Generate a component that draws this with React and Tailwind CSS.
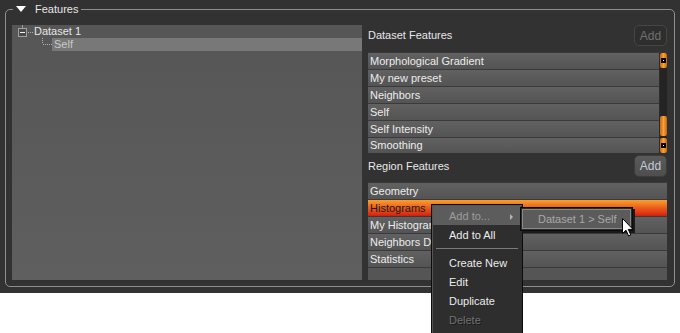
import React from 'react';

const datasetFeatures = [
  'Morphological Gradient',
  'My new preset',
  'Neighbors',
  'Self',
  'Self Intensity',
  'Smoothing',
];

const regionFeatures = [
  { name: 'Geometry' },
  { name: 'Histograms', selected: true },
  { name: 'My Histograms' },
  { name: 'Neighbors Distribution' },
  { name: 'Statistics' },
];

const menuItems = ['Create New', 'Edit', 'Duplicate'];

function ScrollArrow() {
  return (
    <div className="h-[15px] rounded-[2px] bg-gradient-to-r from-[#c4660e] via-[#fba232] to-[#c4660e] flex items-center justify-center">
      <div className="w-[5px] h-[5px] bg-black flex items-center justify-center">
        <div className="w-[1px] h-[1px] bg-white" />
      </div>
    </div>
  );
}

function Cursor() {
  return (
    <svg width="13" height="20" viewBox="0 0 13 20">
      <path
        d="M0.5 0.5 L0.5 15.5 L4 12.2 L6.6 18 L8.8 17 L6.3 11.4 L11 11.4 Z"
        fill="#fff"
        stroke="#000"
        strokeWidth="1"
        strokeLinejoin="miter"
      />
    </svg>
  );
}

export default function App() {
  return (
    <div className="relative w-[680px] h-[333px] overflow-hidden bg-white font-['Liberation_Sans',Arial,sans-serif] text-[11px] leading-none">
      <div className="h-[293px] bg-[#323232] pt-[9px] px-[5px]">
        {/* Features group */}
        <div className="relative h-[278px] border border-[#8e8e8e] rounded-[5px] pt-[15px] pl-[6px] pr-[7px] pb-[6px] flex gap-[6px]">
          <div className="absolute left-[7px] -top-[10px] h-[18px] pl-[3px] pr-[3px] bg-[#323232] flex items-center gap-[9px]">
            <div className="w-0 h-0 border-l-[5px] border-r-[5px] border-t-[6px] border-l-transparent border-r-transparent border-t-white" />
            <span className="text-[#e6e6e6]">Features</span>
          </div>

          {/* Tree */}
          <div className="w-[350px] h-full bg-gradient-to-b from-[#565656] to-[#5f5f5f]">
            <div className="flex h-[13px] items-center">
              <svg width="22" height="13" className="shrink-0">
                <line x1="10.5" y1="0" x2="10.5" y2="3" stroke="#9a9a9a" />
                <rect x="6.5" y="3.5" width="8" height="8" fill="#4a4a4a" stroke="#a0a0a0" />
                <line x1="8" y1="7.5" x2="13" y2="7.5" stroke="#f0f0f0" />
                <line x1="16" y1="7.5" x2="21" y2="7.5" stroke="#b0b0b0" strokeDasharray="1 1" />
              </svg>
              <span className="text-[#e6e6e6]">Dataset 1</span>
            </div>
            <div className="flex h-[13px]">
              <svg width="40" height="13" className="shrink-0">
                <line x1="30.5" y1="0" x2="30.5" y2="6" stroke="#b0b0b0" strokeDasharray="1 1" />
                <line x1="31" y1="6.5" x2="40" y2="6.5" stroke="#b0b0b0" strokeDasharray="1 1" />
              </svg>
              <div className="flex-1 bg-[#787878] text-[#cacaca] pl-[2px] flex items-center">Self</div>
            </div>
          </div>

          {/* Right column */}
          <div className="flex-1 flex flex-col">
            <div className="h-[21px] flex items-center justify-between">
              <span className="text-[#e8e8e8]">Dataset Features</span>
              <div className="w-[33px] h-[21px] rounded-[5px] border border-[#464646] bg-[#2e2e2e] text-[#707070] text-[12px] flex items-center justify-center">
                Add
              </div>
            </div>

            <div className="mt-[6px] flex border-t border-[#3a3a3a] bg-[#2c2c2c]">
              <div className="flex-1 flex flex-col">
                {datasetFeatures.map((f, i) => (
                  <div
                    key={f}
                    className={`pl-[2px] flex items-center text-[#ececec] bg-gradient-to-b from-[#616161] to-[#545454] ${i < datasetFeatures.length - 1 ? 'h-[17px] border-b border-[#3a3a3a]' : 'h-[15px]'}`}
                  >
                    {f}
                  </div>
                ))}
              </div>
              <div className="w-[7px] ml-[1px] bg-[#242424] flex flex-col">
                <ScrollArrow />
                <div className="flex-1 flex flex-col justify-end">
                  <div className="h-[20px] mb-[2px] rounded-[2px] bg-gradient-to-r from-[#c4660e] via-[#fba232] to-[#c4660e]" />
                </div>
                <ScrollArrow />
              </div>
            </div>

            <div className="mt-[2px] h-[22px] flex items-center justify-between">
              <span className="text-[#e8e8e8]">Region Features</span>
              <div className="w-[33px] h-[22px] rounded-[5px] border border-[#3c3c3c] bg-gradient-to-b from-[#5a5a5a] to-[#4e4e4e] text-[#c8cad6] text-[12px] flex items-center justify-center">
                Add
              </div>
            </div>

            <div className="mt-[5px] flex-1 border-t border-[#3a3a3a] bg-[#555555] flex flex-col">
              {regionFeatures.map((r) => (
                <div
                  key={r.name}
                  className={`h-[17px] pl-[2px] flex items-center border-b border-[#3a3a3a] ${
                    r.selected
                      ? 'bg-gradient-to-b from-[#f7a030] via-[#ea5a1a] to-[#d41a0e] text-[#1a1a1a]'
                      : 'bg-gradient-to-b from-[#616161] to-[#545454] text-[#ececec]'
                  }`}
                >
                  {r.name}
                </div>
              ))}
            </div>
          </div>
        </div>
      </div>

      {/* Context menu */}
      <div className="absolute left-[431px] top-[204px] w-[92px] h-[132px] border border-[#0c0c0c] bg-[#2e2e2e] shadow-[inset_1px_1px_0_#565656] p-[1px]">
        <div className="h-[19px] pt-[2px] bg-[#5c5c5c] pl-[16px] pr-[8px] flex items-center justify-between text-[#9c9c9c]">
          <span>Add to...</span>
          <div className="w-0 h-0 border-t-[3px] border-b-[3px] border-l-[3px] border-t-transparent border-b-transparent border-l-[#b4b4b4]" />
        </div>
        <div className="h-[19px] pt-[2px] pl-[16px] flex items-center text-[#ececec]">Add to All</div>
        <div className="mt-[4px] mb-[4px] mx-[3px] h-[1px] bg-[#7a7a7a]" />
        {menuItems.map((m) => (
          <div key={m} className="h-[19px] pt-[2px] pl-[16px] flex items-center text-[#ececec]">
            {m}
          </div>
        ))}
        <div className="h-[19px] pt-[2px] pl-[16px] flex items-center text-[#727272] [text-shadow:1px_1px_0_#1a1a1a]">Delete</div>
      </div>

      {/* Submenu */}
      <div className="absolute left-[520px] top-[207px] w-[113px] h-[24px] border border-[#0c0c0c] bg-[#2a2a2a] p-[1px] shadow-[2px_2px_0_#1a1a1a]">
        <div className="h-full border border-[#8a8a8a] bg-[#5b5b5b] pl-[15px] flex items-center text-[#a8a8a8]">
          Dataset 1 &gt; Self
        </div>
      </div>

      <div className="absolute left-[622px] top-[218px]">
        <Cursor />
      </div>
    </div>
  );
}
